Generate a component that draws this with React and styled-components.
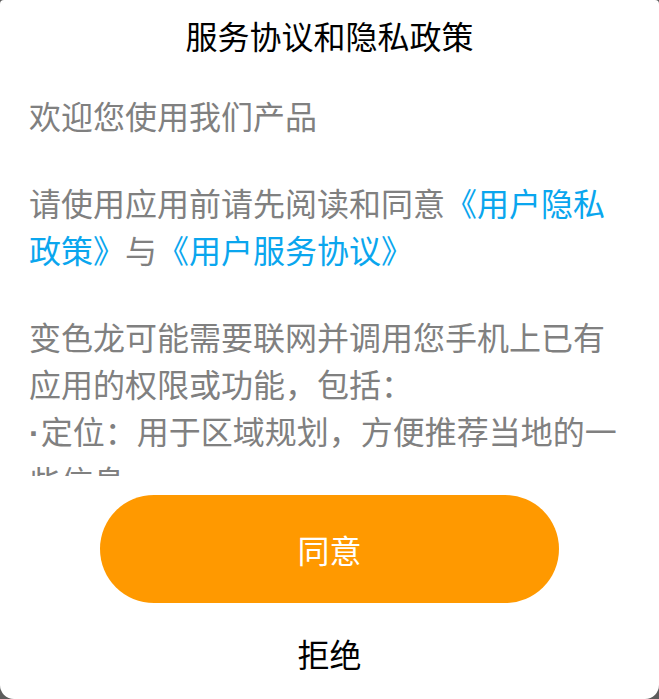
import React from 'react';
import styled, { createGlobalStyle } from 'styled-components';

const GlobalStyle = createGlobalStyle`
  html, body {
    margin: 0;
    padding: 0;
    background: #5c5c5c;
    font-family: "Noto Sans CJK SC", "Noto Sans", sans-serif;
  }
`;

function App() {
  return (
    <>
      <GlobalStyle />
      <Dialog>
        <Title>服务协议和隐私政策</Title>
        <Content>
          <Para>欢迎您使用我们产品</Para>
          <Para>
            请使用应用前请先阅读和同意<Link>《用户隐私政策》</Link>与<Link>《用户服务协议》</Link>
          </Para>
          <Para>
            变色龙可能需要联网并调用您手机上已有应用的权限或功能，包括：
            <br />
            <Dot>·</Dot>定位：用于区域规划，方便推荐当地的一些信息
            <br />
            <Dot>·</Dot>存储：用于缓存数据，提升使用体验
          </Para>
        </Content>
        <Actions>
          <AgreeButton>同意</AgreeButton>
          <RefuseButton>拒绝</RefuseButton>
        </Actions>
      </Dialog>
    </>
  );
}

export default App;

const Dialog = styled.div`
  width: 659px;
  height: 699px;
  background: #fff;
  border-radius: 4px 4px 14px 14px;
  display: flex;
  flex-direction: column;
  overflow: hidden;
`;

const Title = styled.div`
  height: 70px;
  line-height: 70px;
  text-align: center;
  font-size: 32px;
  color: #000;
  flex-shrink: 0;
`;

const Content = styled.div`
  margin-top: 22px;
  height: 384px;
  padding: 0 29px;
  overflow: hidden;
  flex-shrink: 0;
`;

const Para = styled.p`
  margin: 0 0 40px;
  font-size: 32px;
  line-height: 47px;
  color: #808080;
`;

const Dot = styled.span`
  font-family: "Liberation Sans", sans-serif;
  font-weight: 700;
  margin-right: 1px;
`;

const Link = styled.span`
  color: #0aa6ee;
`;

const Actions = styled.div`
  display: flex;
  flex-direction: column;
  align-items: center;
  padding-top: 19px;
`;

const AgreeButton = styled.button`
  width: 459px;
  height: 108px;
  border: none;
  border-radius: 54px;
  background: #ff9900;
  color: #fff;
  font-family: inherit;
  font-size: 32px;
  cursor: pointer;
`;

const RefuseButton = styled.button`
  margin-top: 18px;
  height: 64px;
  border: none;
  background: none;
  color: #000;
  font-family: inherit;
  font-size: 32px;
  cursor: pointer;
`;
